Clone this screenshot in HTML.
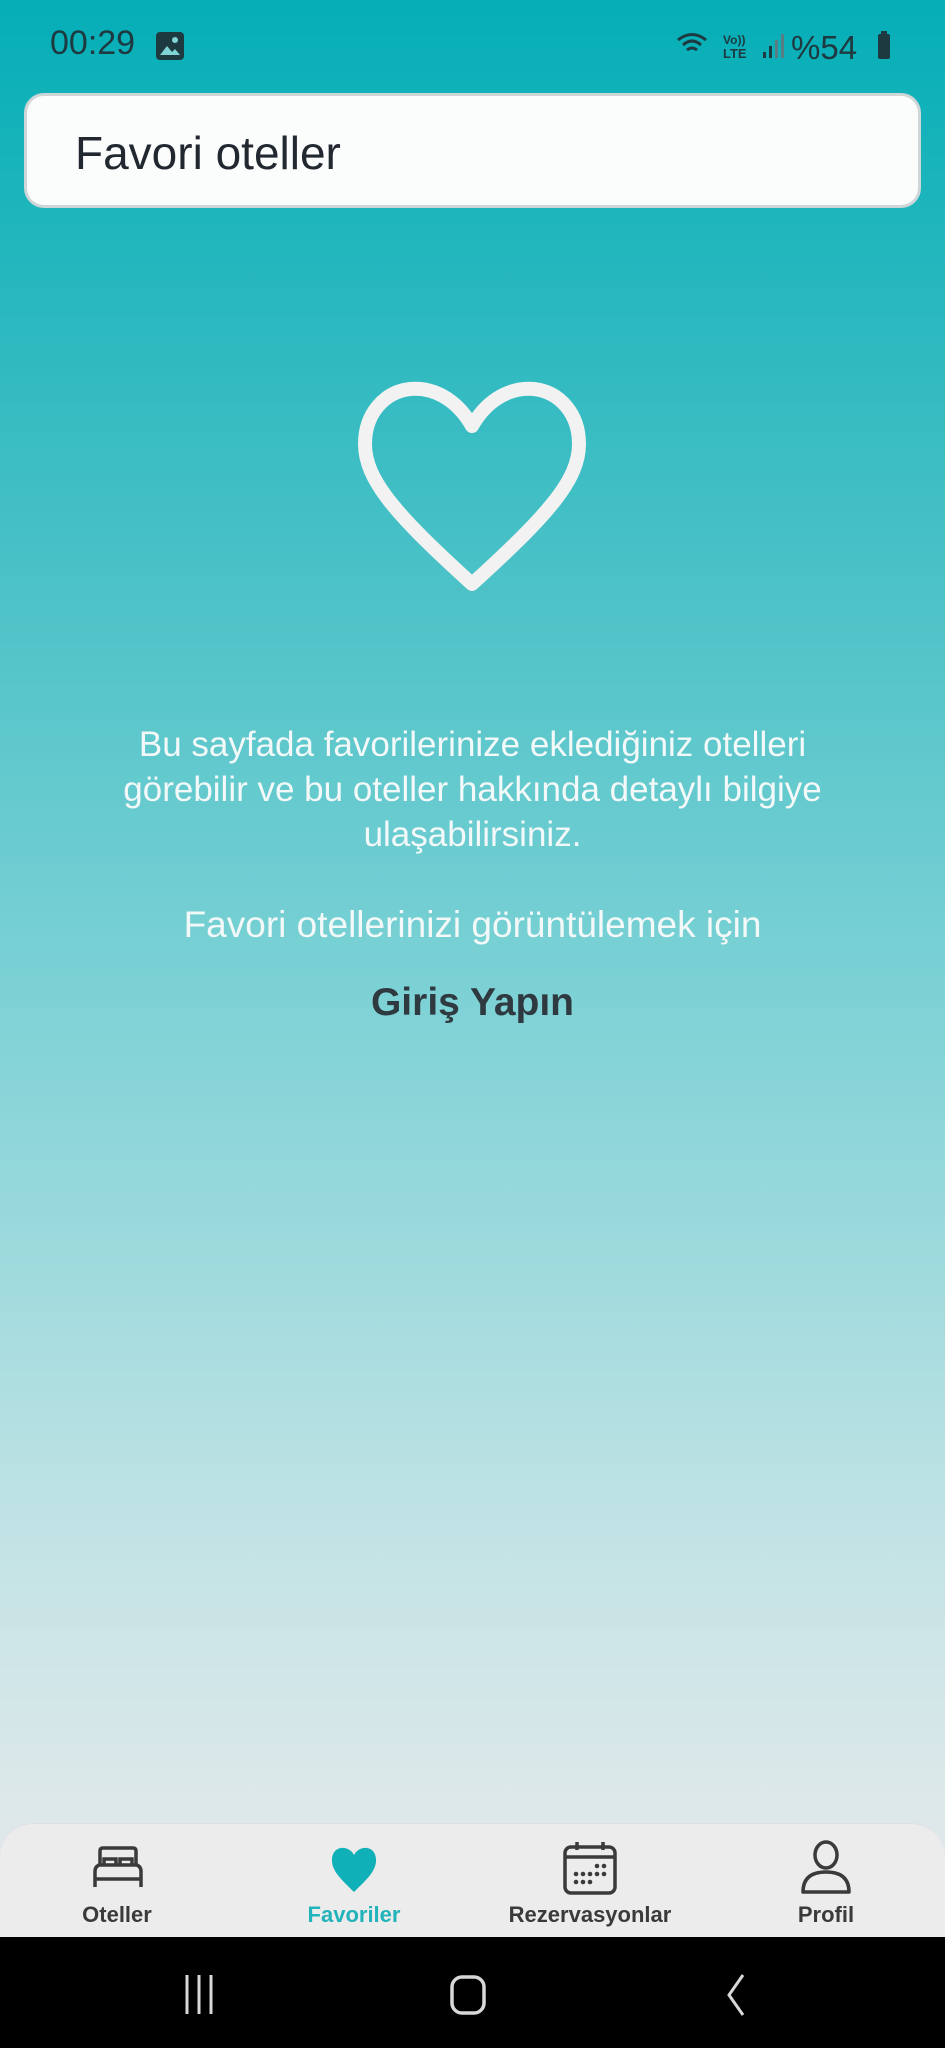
<!DOCTYPE html>
<html><head><meta charset="utf-8"><style>
*{margin:0;padding:0;box-sizing:border-box}
body{width:945px;height:2048px;overflow:hidden;font-family:"Liberation Sans",sans-serif;position:relative;
background:linear-gradient(180deg,#05aeb7 0%,#22b6bd 12%,#4fc3c8 30%,#74cfd3 45%,#9ad9dc 60%,#c2e3e5 75%,#dde8ea 88%,#e4eaec 100%)}
.abs{position:absolute}
.status{top:24px;left:50px;font-size:34px;color:#1d3a40}
.search{left:24px;top:93px;width:897px;height:115px;background:#fbfcfc;border:3px solid #cfd6d8;border-radius:20px}
.search span{position:absolute;left:48px;top:30px;font-size:46px;color:#222830}
.txt{width:945px;text-align:center;color:#f3f8f8;font-size:35px;line-height:45px}
.nav{left:0;top:1823px;width:945px;height:114px;background:#ececec;border-radius:34px 34px 0 0;border-top:1px solid #e0e0e0}
.lbl{font-size:22px;font-weight:bold;color:#3a3a3a;text-align:center;width:200px;top:1902px}
.sys{left:0;top:1937px;width:945px;height:111px;background:#000}
</style></head><body>
<div class="abs status">00:29</div>
<svg class="abs" style="left:155px;top:31px" width="30" height="30" viewBox="0 0 30 30"><rect x="1" y="1" width="28" height="28" rx="4" fill="#1d3a40"/><path d="M5 24 L12 15 L17 21 L20 18 L25 24Z" fill="#7fd3d7"/><circle cx="20" cy="9" r="3" fill="#7fd3d7"/></svg>
<svg class="abs" style="left:675px;top:28px" width="220" height="36" viewBox="0 0 220 36">
<path d="M3 12 Q17 1 31 12 M8 17 Q17 9 26 17 M12 22 Q17 18 22 22" stroke="#1d3a40" stroke-width="3" fill="none"/>
<text x="48" y="16" font-size="12" font-weight="bold" fill="#1d3a40" font-family="Liberation Sans">Vo))</text>
<text x="48" y="30" font-size="13" font-weight="bold" fill="#1d3a40" font-family="Liberation Sans">LTE</text>
<rect x="88" y="24" width="3" height="6" fill="#1d3a40"/><rect x="94" y="18" width="3" height="12" fill="#1d3a40"/><rect x="100" y="12" width="3" height="18" fill="#5a7d82"/><rect x="106" y="6" width="3" height="24" fill="#5a7d82"/>
<text x="116" y="31" font-size="33" fill="#1d3a40" font-family="Liberation Sans">%54</text>
<rect x="203" y="6" width="12" height="25" rx="2" fill="#1d3a40"/><rect x="206" y="3" width="6" height="4" fill="#1d3a40"/>
</svg>
<div class="abs search"><span>Favori oteller</span></div>
<svg class="abs" style="left:356px;top:378px" width="232" height="216" viewBox="0 0 232 216">
<path d="M116 48 C100 20 76 9 54 11 C28 14 9 36 9 66 C9 102 40 137 116 206 C192 137 223 102 223 66 C223 36 204 14 178 11 C156 9 132 20 116 48Z" fill="none" stroke="#f2f2f2" stroke-width="14" stroke-linejoin="round"/>
</svg>
<div class="abs txt" style="top:722px">Bu sayfada favorilerinize eklediğiniz otelleri<br>görebilir ve bu oteller hakkında detaylı bilgiye<br>ulaşabilirsiniz.</div>
<div class="abs txt" style="top:902px;font-size:37px">Favori otellerinizi görüntülemek için</div>
<div class="abs txt" style="top:980px;font-weight:bold;color:#2f3a40;font-size:39px">Giriş Yapın</div>
<div class="abs nav"></div>
<svg class="abs" style="left:90px;top:1845px" width="56" height="44" viewBox="0 0 56 44"><path d="M5 42 V26 Q5 22 9 20 H47 Q51 22 51 26 V42 M5 34 H51 M10 20 V6 Q10 3 13 3 H43 Q46 3 46 6 V20 M14 20 V14 H26 V20 M30 20 V14 H42 V20" fill="none" stroke="#3a3a3a" stroke-width="3.5"/></svg>
<svg class="abs" style="left:329px;top:1843px" width="50" height="50" viewBox="0 0 50 50"><path d="M25 12 C20 2 4 2 3 16 C2 28 14 38 25 49 C36 38 48 28 47 16 C46 2 30 2 25 12Z" fill="#0fb0b8"/></svg>
<svg class="abs" style="left:561px;top:1840px" width="58" height="56" viewBox="0 0 58 56"><rect x="4" y="7" width="50" height="46" rx="6" fill="none" stroke="#3a3a3a" stroke-width="3.5"/><path d="M4 17 H54 M16 2 V10 M42 2 V10" stroke="#3a3a3a" stroke-width="3.5"/><g fill="#3a3a3a"><circle cx="36" cy="26" r="2.3"/><circle cx="43" cy="26" r="2.3"/><circle cx="15" cy="34" r="2.3"/><circle cx="22" cy="34" r="2.3"/><circle cx="29" cy="34" r="2.3"/><circle cx="36" cy="34" r="2.3"/><circle cx="43" cy="34" r="2.3"/><circle cx="15" cy="42" r="2.3"/><circle cx="22" cy="42" r="2.3"/><circle cx="29" cy="42" r="2.3"/></g></svg>
<svg class="abs" style="left:799px;top:1840px" width="54" height="56" viewBox="0 0 54 56"><ellipse cx="27" cy="15" rx="11" ry="13" fill="none" stroke="#3a3a3a" stroke-width="3.5"/><path d="M4 52 Q4 32 27 32 Q50 32 50 52 Z" fill="none" stroke="#3a3a3a" stroke-width="3.5" stroke-linejoin="round"/></svg>
<div class="abs lbl" style="left:17px">Oteller</div>
<div class="abs lbl" style="left:254px;color:#23b3ba">Favoriler</div>
<div class="abs lbl" style="left:490px">Rezervasyonlar</div>
<div class="abs lbl" style="left:726px">Profil</div>
<div class="abs sys"></div>
<svg class="abs" style="left:180px;top:1970px" width="600" height="50" viewBox="0 0 600 50">
<path d="M7 5 V44 M19 5 V44 M31 5 V44" stroke="#d8d8d8" stroke-width="3"/>
<rect x="272" y="7" width="32" height="36" rx="10" fill="none" stroke="#d8d8d8" stroke-width="3.5"/>
<path d="M563 5 L549 25 L563 45" stroke="#d8d8d8" stroke-width="3" fill="none"/>
</svg>
</body></html>
